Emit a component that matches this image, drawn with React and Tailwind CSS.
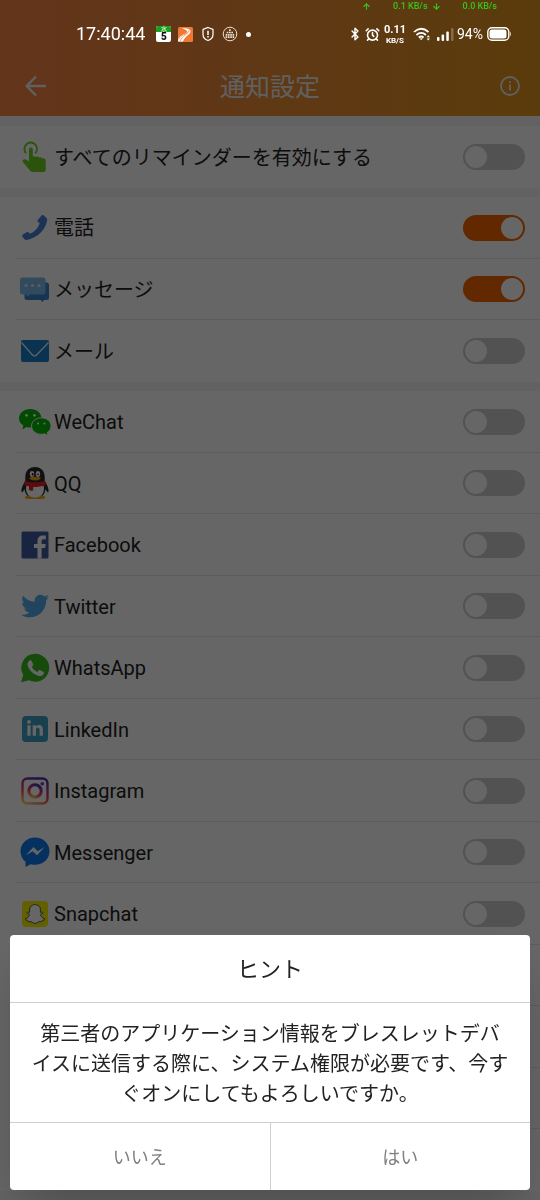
import React, { useState } from "react";
import { FaTwitter, FaLinkedinIn, FaSnapchatGhost } from "react-icons/fa";
import { Bluetooth, AlarmClock, ArrowUp, ArrowDown } from "lucide-react";

function TouchIcon() {
  return (
    <svg viewBox="0 0 32 32" className="size-8" fill="#6ed01e">
      <path d="M6.6 12.9a7.2 7.2 0 1 1 10.2 0l-1.1-1.3a5.4 5.4 0 1 0-7.9 0z" />
      <path d="M10 8.500a1.900 1.900 0 0 1 3.800 0v7.300c.9-1 2.700-.8 3.200.3.900-.9 2.600-.6 3.100.5 1-.8 2.600-.4 3 .8 1.600-.5 3.600.3 3.600 2.300v9.300c0 1.300-.8 2-2 2H13.500c-.9 0-1.500-.4-2.100-1.100l-7.300-8.600c-1.500-2 .8-3.700 2.600-2.700L10 20.300z" />
    </svg>
  );
}

function PhoneIcon() {
  return (
    <svg viewBox="0 0 32 32" className="size-8" fill="#4a80d8">
      <path d="M22.300 3.800c.7-.8 1.600-.9 2.400-.3l2.600 2.300c.8.700 1 1.400.8 2.400C26.700 17.400 19.500 25 7.900 28c-1.100.3-2 0-2.700-.9l-1.600-2.300c-.6-.8-.5-1.700.3-2.300l3.700-2.300c.8-.5 1.700-.4 2.300.3l1.100 1.300c4.700-2.100 8.200-5.800 9.700-10.600l-1.300-.9c-.9-.6-1.100-1.400-.6-2.300z" />
    </svg>
  );
}

function MessageIcon() {
  return (
    <svg viewBox="0 0 32 32" className="size-8">
      <path fill="#3b86cb" d="M8 9.500h19.500a2.500 2.500 0 0 1 2.500 2.500v12.500a2.500 2.500 0 0 1-2.500 2.500H25l-1.500 2-2-2H8a2.500 2.500 0 0 1-2.500-2.500V12z" />
      <path fill="#7db8ec" d="M3.500 4.500h20.500a2.500 2.500 0 0 1 2.500 2.500v12a2.500 2.500 0 0 1-2.500 2.500H11l-2.500 2-1.500-2H3.500A2.500 2.500 0 0 1 1 19V7a2.500 2.500 0 0 1 2.500-2.500z" />
      <g fill="#d8ebfc">
        <circle cx="7" cy="12.500" r="1.500" />
        <circle cx="13.500" cy="12.500" r="1.500" />
        <circle cx="20" cy="12.500" r="1.500" />
      </g>
    </svg>
  );
}

function MailIcon() {
  return (
    <svg viewBox="0 0 32 32" className="size-8">
      <rect x="2" y="5" width="28" height="22" rx="2" fill="#1a80cd" />
      <path d="M2.500 7.500L13 19.500q2.500 2.700 5 0L29.500 7.500" fill="none" stroke="#eaf4fc" strokeWidth="1.300" />
    </svg>
  );
}

function WeChatIcon() {
  return (
    <svg viewBox="0 0 32 32" className="size-8">
      <g fill="#06ba06">
        <path d="M11.300 3C5.100 3 0 7.100 0 12.300c0 3 1.700 5.600 4.300 7.300l-1 3.800 4.200-2.300c1.200.4 2.500.5 3.800.5 6.200 0 11.200-4.100 11.200-9.300S17.500 3 11.300 3z" />
        <path stroke="#fff" strokeWidth="1" d="M22.300 11.800c-5.500 0-9.800 3.700-9.800 8.200 0 4.600 4.300 8.300 9.800 8.300 1.200 0 2.300-.2 3.300-.5l3.500 2-.9-3.200c2.400-1.500 3.900-3.900 3.900-6.600 0-4.500-4.300-8.200-9.800-8.200z" />
      </g>
      <g fill="#fff">
        <circle cx="7.500" cy="9.300" r="1.400" />
        <circle cx="15.400" cy="9.300" r="1.400" />
        <circle cx="19" cy="17.500" r="1.100" />
        <circle cx="25.400" cy="17.500" r="1.100" />
      </g>
    </svg>
  );
}

function QQIcon() {
  return (
    <svg viewBox="0 0 32 34" className="h-[34px] w-8">
      <path fill="#282828" d="M16 1C9.800 1 6.300 5.300 6.300 11v4C4.300 18 2.600 21.500 2.400 24.500c0 2 .9 2.300 1.800.8l1.300-2C6.500 29.500 10 32 16 32s9.500-2.500 10.500-8.700l1.300 2c.9 1.500 1.800 1.200 1.800-.8-.2-3-1.900-6.500-3.900-9.500v-4C25.700 5.300 22.200 1 16 1z" />
      <path fill="#eda81c" d="M6 31.700c0-1.700 2.500-2.500 6-2l4 .7 4-.7c3.500-.5 6 .3 6 2 0 1-2 1.300-5 1.300H11c-3 0-5-.3-5-1.300z" />
      <path fill="#fff" d="M8 18h16c.9 2 1.300 4.500.8 6.500C24 29 20.800 31.500 16 31.500S8 29 7.200 24.500c-.5-2-.1-4.500.8-6.500z" />
      <ellipse cx="13" cy="8" rx="2.200" ry="2.900" fill="#fff" />
      <ellipse cx="19" cy="8" rx="2.200" ry="2.900" fill="#fff" />
      <ellipse cx="13.600" cy="8.300" rx=".9" ry="1.300" fill="#111" />
      <path d="M17.900 8.700q1.100-1.900 2.200 0" stroke="#111" strokeWidth="1" fill="none" />
      <path fill="#f4aa16" d="M10.300 12c1-1.700 10.400-1.700 11.400 0 .3 1-2.500 2.400-5.700 2.400S10 13 10.300 12z" />
      <path fill="#e41f24" d="M5.800 14.800c5.900 2 14.500 2 20.400 0l.6 4.200c-3.800 1.500-8 2-12.600 2v3.500c-1.500.3-2.900.2-4.200-.4v-3.800c-1.800-.3-3.400-.7-4.800-1.300z" />
    </svg>
  );
}

function FacebookIcon() {
  return (
    <svg viewBox="0 0 32 32" className="size-8">
      <rect x="2.500" y="2.500" width="27" height="27" rx="1.500" fill="#3f5ba3" />
      <path fill="#fff" d="M18.500 29.500V19.100H15v-4.200h3.500v-3c0-3.500 2.100-5.500 5.300-5.500 1.500 0 2.600.1 3 .2v3.700h-2.100c-1.700 0-2.100.8-2.100 2v2.600h4.100l-.6 4.200h-3.500v10.400z" />
    </svg>
  );
}

function WhatsAppIcon() {
  return (
    <svg viewBox="0 0 32 32" className="size-8">
      <path fill="#38bc1e" d="M16.200 1.800a14 14 0 1 1-6.300 26.500L2 30.300l2.200-7.400A14 14 0 0 1 16.200 1.800z" />
      <path fill="#fff" d="M10.600 8.600c.6-.6 1.600-.5 2 .3l1.500 3c.3.600.2 1.100-.2 1.600l-1.100 1.300c1.200 2.400 3 4.100 5.500 5.200l1.400-1.500c.4-.4.900-.5 1.400-.3l3.200 1.600c.6.300.8.800.6 1.400-.5 2-2.400 3.200-4.700 2.700-6-1.200-10.500-5.700-11.600-10.800-.4-1.900.7-3.400 2-4.500z" />
    </svg>
  );
}

function InstagramIcon() {
  return (
    <svg viewBox="0 0 32 32" className="size-8">
      <defs>
        <linearGradient id="ig" x1="0.200" y1="1" x2="0.600" y2="0">
          <stop offset="0" stopColor="#fdc465" />
          <stop offset="0.350" stopColor="#ee5350" />
          <stop offset="0.650" stopColor="#c62f86" />
          <stop offset="1" stopColor="#4a35a5" />
        </linearGradient>
      </defs>
      <rect x="3.500" y="3.500" width="25" height="25" rx="5" fill="#fff" stroke="url(#ig)" strokeWidth="2.400" />
      <circle cx="16" cy="16" r="6.200" fill="none" stroke="url(#ig)" strokeWidth="3" />
      <circle cx="23.300" cy="8.700" r="1.800" fill="#8b369c" />
    </svg>
  );
}

function MessengerIcon() {
  return (
    <svg viewBox="0 0 32 32" className="size-8">
      <path fill="#0a7cf0" d="M16 1.500c8 0 14.500 6 14.500 13.700S24 28.800 16 28.800c-1.500 0-2.900-.2-4.300-.6L6.500 31v-5.300C3.400 23.200 1.500 19.400 1.500 15.200 1.500 7.500 8 1.500 16 1.500z" />
      <path fill="#fff" d="M6.800 19.300l7.700-8.200 4.200 4.100 6.900-4.100-7.600 8.100-4.200-4z" />
    </svg>
  );
}

function TwitterIcon() {
  return <FaTwitter className="size-7 text-[#55acee]" />;
}

function LinkedInIcon() {
  return (
    <span className="flex size-[26px] items-center justify-center rounded bg-[#3fa0c4]">
      <FaLinkedinIn className="size-[18px] text-white" />
    </span>
  );
}

function SnapchatIcon() {
  return (
    <span className="flex size-[26px] items-center justify-center rounded bg-[#f5f000]">
      <FaSnapchatGhost className="size-[20px] fill-white stroke-[#333] [stroke-width:20]" />
    </span>
  );
}

const GROUPS = [
  [{ id: "all", label: "すべてのリマインダーを有効にする", Icon: TouchIcon }],
  [
    { id: "call", label: "電話", Icon: PhoneIcon },
    { id: "sms", label: "メッセージ", Icon: MessageIcon },
    { id: "mail", label: "メール", Icon: MailIcon },
  ],
  [
    { id: "wechat", label: "WeChat", Icon: WeChatIcon },
    { id: "qq", label: "QQ", Icon: QQIcon },
    { id: "facebook", label: "Facebook", Icon: FacebookIcon },
    { id: "twitter", label: "Twitter", Icon: TwitterIcon },
    { id: "whatsapp", label: "WhatsApp", Icon: WhatsAppIcon },
    { id: "linkedin", label: "LinkedIn", Icon: LinkedInIcon },
    { id: "instagram", label: "Instagram", Icon: InstagramIcon },
    { id: "messenger", label: "Messenger", Icon: MessengerIcon },
    { id: "snapchat", label: "Snapchat", Icon: SnapchatIcon },
    { id: "slot-1" },
    { id: "slot-2" },
    { id: "slot-3" },
    { id: "slot-4" },
  ],
];

function SettingRow({ item, checked, onToggle }) {
  const { id, label, Icon } = item;
  return (
    <li className="flex h-[61px] items-center gap-[3px] border-b border-[#e6e6e6] pr-[15px] pl-[3px] last:border-b-0 odd:h-[62px]">
      {label && (
        <>
          <span className="flex w-8 shrink-0 justify-center">
            <Icon />
          </span>
          <label htmlFor={id} className="flex-1 pt-px text-[20px] leading-7 text-[#222]">
            {label}
          </label>
          <input
            id={id}
            type="checkbox"
            checked={checked}
            onChange={() => onToggle(id)}
            className="flex h-[26px] w-[62px] shrink-0 appearance-none items-center rounded-full border-2 border-[#cdcdcd] bg-[#cdcdcd] before:size-[22px] before:rounded-full before:bg-white before:content-[''] checked:justify-end checked:border-[#f56400] checked:bg-[#f56400]"
          />
        </>
      )}
    </li>
  );
}

function StatusBar() {
  return (
    <div className="fixed inset-x-0 top-0 z-20 text-white">
      {/* Network speed */}
      <div className="flex h-3 items-center justify-end pr-[43px] text-[9px] leading-3 font-medium text-[#35c41c]">
        <ArrowUp className="mr-[22px] size-[9px]" strokeWidth={3} />
        <span>0.1 KB/s</span>
        <ArrowDown className="mr-[22px] ml-1 size-[9px]" strokeWidth={3} />
        <span>0.0 KB/s</span>
      </div>

      <div className="flex h-11 items-center justify-between pr-[29px] pl-[76px]">
        <div className="flex items-center">
          <span className="text-[18px] leading-6">17:40:44</span>
          <span className="ml-[11px] flex w-[15px] flex-col items-center rounded-xs bg-white">
            <span className="w-full rounded-t-xs bg-[#1fa01c] text-center text-[6px] leading-[6px]">水</span>
            <span className="text-[10px] leading-[10px] font-black text-[#111]">5</span>
          </span>
          <svg viewBox="0 0 15 15" className="ml-[7px] size-[15px]">
            <rect width="15" height="15" rx="1.500" fill="#f07835" />
            <path d="M4 1.500c4-1 8 .3 8.500 2.500C13 7 7 9 5 14.500H0V12c3-5 9-5 9-7.500C9 3 6.500 2.300 4 1.500z" fill="#fff" />
            <path d="M11 3.500C11.500 6.500 4 8 2 14.500M10 4.500C9.500 7 2 8 .5 12.500" fill="none" stroke="#f07835" strokeWidth=".7" />
          </svg>
          <svg viewBox="0 0 16 16" className="ml-[7px] size-4" fill="none" stroke="#fff">
            <path strokeWidth="1.200" d="M8 1.500l5 2v5c0 3-2 5-5 6-3-1-5-3-5-6v-5z" />
            <path strokeWidth="1.500" d="M8 4.700v4.300M8 10v1.500" />
          </svg>
          <svg viewBox="0 0 16 16" className="ml-[6px] size-4" fill="none" stroke="#e9dfd3">
            <circle cx="8" cy="8" r="6.800" strokeWidth="1" />
            <path strokeWidth="1.700" strokeDasharray="1.700 .6" d="M7 4.200h1.700M4.700 6.500h6.300M3.600 8.800h8.600M3.600 11.100h8.600" />
          </svg>
          <span className="ml-[8px] size-[5px] rounded-full bg-white" />
        </div>

        <div className="flex items-center">
          <Bluetooth className="size-[14px]" strokeWidth={2.500} />
          <AlarmClock className="ml-[3px] size-[15px]" strokeWidth={2.500} />
          <div className="ml-1 flex flex-col items-center font-bold">
            <span className="text-[11px] leading-3">0.11</span>
            <span className="text-[8px] leading-[9px]">KB/S</span>
          </div>
          <svg viewBox="0 0 18 14" className="ml-[7px] h-[14px] w-[18px]" fill="none" stroke="#fff" strokeWidth="1.700">
            <path d="M1 5q7-6.500 14.500 0M3.400 8Q8.200 3.800 13 8M5.800 10.500q2.400-2 4.800 0" />
            <path d="M8.200 13l-1.500-1.500h3z" fill="#fff" strokeWidth=".3" />
            <path d="M15.300 8.300l-1.700 1.900H17zM15.300 13.500l-1.700-1.900H17z" fill="#fff" stroke="none" />
          </svg>
          <svg viewBox="0 0 18 14" className="ml-[6px] h-[14px] w-[18px]" fill="#fff">
            <rect x="0" y="10" width="2.500" height="4" rx="1" />
            <rect x="4.600" y="7.500" width="2.500" height="6.500" rx="1" />
            <rect x="9.300" y="4.500" width="2.500" height="9.500" rx="1" />
            <rect x="14" y="1" width="2.500" height="13" rx="1" opacity=".25" />
          </svg>
          <span className="ml-[2px] text-[14px] leading-5">94%</span>
          <svg viewBox="0 0 24 14" className="ml-1 h-[14px] w-6">
            <rect x=".8" y=".8" width="21" height="12.400" rx="4.200" fill="none" stroke="#fff" strokeWidth="1.400" />
            <rect x="2.500" y="2.500" width="17" height="9" rx="2.500" fill="#fff" />
            <path d="M23 4.500q1.500 2.500 0 5z" fill="#fff" />
          </svg>
        </div>
      </div>
    </div>
  );
}

function HintDialog({ onClose }) {
  return (
    <div className="fixed inset-0 z-10 flex items-end bg-black/60 p-[10px]">
      <div
        role="dialog"
        aria-labelledby="hint-title"
        className="w-full overflow-hidden rounded bg-white text-center text-[#222] shadow-2xl"
      >
        <h2 id="hint-title" className="border-b border-[#cfcfcf] pt-[19px] pb-4 text-[22px] leading-8">
          ヒント
        </h2>
        <p className="border-b border-[#cfcfcf] pt-4 pb-[13px] text-[20px] leading-[30px]">
          第三者のアプリケーション情報をブレスレットデバ
          <br />
          イスに送信する際に、システム権限が必要です、今す
          <br />
          ぐオンにしてもよろしいですか。
        </p>
        <div className="flex divide-x divide-[#cfcfcf] text-[18px] leading-7 text-[#808080]">
          <button type="button" className="flex-1 pt-[21px] pb-[18px]" onClick={onClose}>
            いいえ
          </button>
          <button type="button" className="flex-1 pt-[21px] pb-[18px]" onClick={onClose}>
            はい
          </button>
        </div>
      </div>
    </div>
  );
}

export default function App() {
  const [enabled, setEnabled] = useState({ call: true, sms: true });
  const [hintOpen, setHintOpen] = useState(true);

  const toggle = (id) => setEnabled((prev) => ({ ...prev, [id]: !prev[id] }));

  return (
    <div
      lang="ja"
      className="h-screen overflow-hidden bg-[#f6f6f6] font-[Roboto,'Noto_Sans_CJK_JP',sans-serif]"
    >
      <StatusBar />
      <header className="flex h-[116px] items-center justify-between bg-linear-to-r from-[#f98444] to-[#e2951c] px-5 pt-14 text-[#f0f0f0]">
        <button type="button" aria-label="戻る" className="flex size-8 items-center justify-center">
          <svg viewBox="0 0 22 22" className="size-[22px]" fill="none" stroke="currentColor" strokeWidth="2.400">
            <path d="M21 11H2.500M11 1.500L1.700 11l9.300 9.500" />
          </svg>
        </button>
        <h1 className="pt-[3px] text-[25px] leading-9">通知設定</h1>
        <button type="button" aria-label="情報" className="flex size-8 items-center justify-end">
          <svg viewBox="0 0 20 20" className="size-5" fill="none" stroke="currentColor" strokeWidth="1.800">
            <circle cx="10" cy="10" r="9" />
            <path d="M10 8.500v6M10 5.300v1.700" />
          </svg>
        </button>
      </header>

      <main className="flex flex-col gap-[9px] pt-[10px]">
        {GROUPS.map((items) => (
          <ul key={items[0].id} className="bg-white pl-4">
            {items.map((item) => (
              <SettingRow key={item.id} item={item} checked={Boolean(enabled[item.id])} onToggle={toggle} />
            ))}
          </ul>
        ))}
      </main>

      {hintOpen && <HintDialog onClose={() => setHintOpen(false)} />}
    </div>
  );
}
